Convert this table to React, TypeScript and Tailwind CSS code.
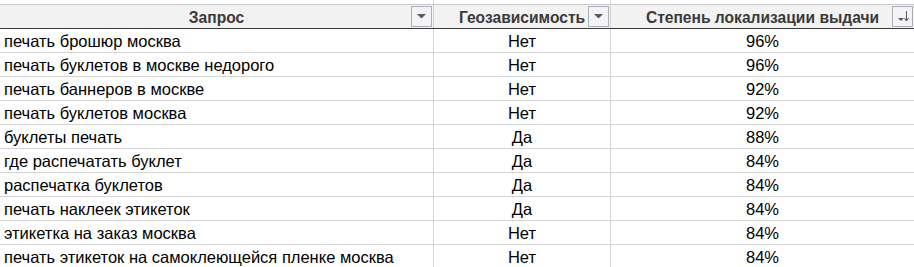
const rows: [string, string, string][] = [
  ["печать брошюр москва", "Нет", "96%"],
  ["печать буклетов в москве недорого", "Нет", "96%"],
  ["печать баннеров в москве", "Нет", "92%"],
  ["печать буклетов москва", "Нет", "92%"],
  ["буклеты печать", "Да", "88%"],
  ["где распечатать буклет", "Да", "84%"],
  ["распечатка буклетов", "Да", "84%"],
  ["печать наклеек этикеток", "Да", "84%"],
  ["этикетка на заказ москва", "Нет", "84%"],
  ["печать этикеток на самоклеющейся пленке москва", "Нет", "84%"],
];

const FilterButton = ({ sorted }: { sorted?: boolean }) => (
  <div className="absolute right-[1px] top-[1px] w-[21px] h-[21px] border border-[#a9b0bb] bg-[#f3f3f3] flex items-center justify-center">
    {sorted ? (
      <svg width="15" height="13" viewBox="0 0 15 13">
        <path d="M3 8h6l-3 3z" fill="#5a5a5a" />
        <path d="M11.5 1v9" stroke="#5a5a5a" strokeWidth="1" />
        <path d="M9.5 8l2 3 2-3" fill="none" stroke="#5a5a5a" strokeWidth="1" />
      </svg>
    ) : (
      <svg width="9" height="5" viewBox="0 0 9 5">
        <path d="M0 0h9l-4.5 4.5z" fill="#5a5a5a" />
      </svg>
    )}
  </div>
);

const App = () => {
  return (
    <div className="w-[914px] h-[267px] overflow-hidden bg-white font-['Liberation_Sans',Arial,sans-serif] text-[16.5px]">
      <div className="grid grid-cols-[434px_177px_303px] h-[4px]">
        <div className="border-r border-[#d4d4d4]" />
        <div className="border-r border-[#d4d4d4]" />
        <div />
      </div>
      <div className="grid grid-cols-[434px_177px_303px] h-[25px] border-t border-b border-t-[#c8c8c8] border-b-[#3a3a3a] bg-[#f2f2f2] font-bold text-[#3a3a3a] text-[15.6px]">
        <div className="relative border-r border-[#d4d4d4] flex items-end justify-center leading-[21px]">
          Запрос
          <FilterButton />
        </div>
        <div className="relative border-r border-[#d4d4d4] flex items-end justify-center leading-[21px]">
          Геозависимость
          <FilterButton />
        </div>
        <div className="relative flex items-end justify-center leading-[21px]">
          Степень локализации выдачи
          <FilterButton sorted />
        </div>
      </div>
      {rows.map((row, index) => (
        <div
          key={index}
          className="grid grid-cols-[434px_177px_303px] h-[24px] border-b border-[#d4d4d4] text-black leading-[22px]"
        >
          <div className="border-r border-[#d4d4d4] flex items-end pl-[4px] whitespace-nowrap">
            {row[0]}
          </div>
          <div className="border-r border-[#d4d4d4] flex items-end justify-center">
            {row[1]}
          </div>
          <div className="flex items-end justify-center">{row[2]}</div>
        </div>
      ))}
    </div>
  );
};

export default App;
